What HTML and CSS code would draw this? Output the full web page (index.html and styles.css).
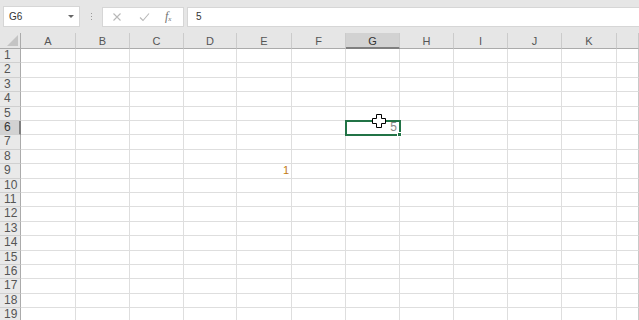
FILE: index.html
```html
<!DOCTYPE html>
<html>
<head>
  <title>Sheet1</title>
  <link rel="stylesheet" href="styles.css">
</head>
<body>
  <div class="toolbar">
    <div class="namebox">
      <span>G6</span>
      <span class="caret"></span>
    </div>
    <div class="grip"><i></i><i></i><i></i></div>
    <div class="fx-buttons">
      <svg class="fx-icon" width="10" height="10" viewBox="0 0 10 10"><path d="M1.5 1.5 L8.5 8.5 M8.5 1.5 L1.5 8.5" stroke="#b8b8b8" stroke-width="1.1" fill="none"/></svg>
      <svg class="fx-icon" width="11" height="10" viewBox="0 0 11 10"><path d="M1 5.5 L4 8.5 L10 1.5" stroke="#b8b8b8" stroke-width="1.1" fill="none"/></svg>
      <span class="fx-label">f<sub>x</sub></span>
    </div>
    <div class="formula">5</div>
  </div>

  <div class="sheet" id="sheet"></div>

  <svg class="cursor" width="14" height="14" viewBox="0 0 14 14">
    <path d="M4.5 0.5 H9.5 V4.5 H13.5 V9.5 H9.5 V13.5 H4.5 V9.5 H0.5 V4.5 H4.5 Z" fill="#fff" stroke="#000" stroke-width="1"/>
  </svg>

  <script src="script.js"></script>
</body>
</html>
```

FILE: styles.css
```css
body {
  margin: 0;
  background-color: #e6e6e6;
  font-family: "Liberation Sans", Arial, sans-serif;
  width: 639px;
  height: 320px;
  overflow: hidden;
  position: relative;
}

.toolbar {
  display: flex;
  align-items: center;
  height: 33px;
  padding: 0 0 0 3px;
  box-sizing: border-box;
}
.namebox {
  width: 77px; height: 21px;
  box-sizing: border-box;
  background: #fff;
  border: 1px solid #d6d6d6;
  display: flex; align-items: center; justify-content: space-between;
  padding: 0 5px 0 5px;
  font-size: 10px; color: #333;
  margin-top: -1px;
}
.caret {
  width: 0; height: 0;
  border-left: 3px solid transparent;
  border-right: 3px solid transparent;
  border-top: 3px solid #666;
}
.grip {
  width: 22px;
  display: flex; flex-direction: column; align-items: center; gap: 2px;
}
.grip i { width: 1px; height: 1px; background: #9a9a9a; display: block; }
.fx-buttons {
  width: 82px; height: 20px;
  box-sizing: border-box;
  background: #fff;
  border: 1px solid #d6d6d6;
  display: flex; align-items: center;
  padding-left: 9px;
  gap: 17px;
}
.fx-label {
  font-family: "Liberation Serif", serif;
  font-style: italic; font-size: 12px; color: #707070;
  margin-left: -2px;
}
.fx-label sub { font-size: 7px; vertical-align: -1px; }
.formula {
  flex: 1;
  height: 20px;
  margin-left: 3px;
  background: #fff;
  border: 1px solid #d6d6d6;
  border-right: none;
  box-sizing: border-box;
  font-size: 10px; color: #333;
  padding-left: 8px; line-height: 18px;
}

.sheet {
  display: grid;
  grid-template-columns: 21px 55px 54px 54px 53px 55px 54px 54px 54px 54px 54px 55px 1fr;
  grid-template-rows: 16px repeat(3, 14px 15px 14px 15px 14px) 14px 15px 14px 15px;
  background: #fff;
}
.cell {
  border-right: 1px solid #dedede;
  border-bottom: 1px solid #dedede;
  box-sizing: border-box;
  font-size: 11px;
  line-height: 13px;
  text-align: right;
  padding-right: 2px;
  position: relative;
}
.col-head {
  background: #e6e6e6;
  border-right: 1px solid #cbcbcb;
  border-bottom: 1px solid #ababab;
  text-align: center;
  padding: 2px 0 0 0;
  font-size: 11px; color: #555;
}
.col-head.sel {
  background: #d2d2d2;
  border-bottom: 2px solid #7f7f7f;
  color: #333;
}
.corner {
  background: #e6e6e6;
  border-right: 1px solid #ababab;
  border-bottom: 1px solid #ababab;
  position: relative;
}
.corner::after {
  content: "";
  position: absolute; right: 2px; bottom: 2px;
  border-left: 11px solid transparent;
  border-bottom: 11px solid #c4c4c4;
}
.row-head {
  background: #e9e9e9;
  border-right: 1px solid #ababab;
  border-bottom: 1px solid #d0d0d0;
  box-sizing: border-box;
  text-align: left;
  padding-left: 4px;
  font-size: 12px; line-height: 13px; color: #555;
}
.row-head.sel {
  background: #d2d2d2;
  border-right: 2px solid #7f7f7f;
  color: #333;
}
.active {
  outline: 2px solid #217346;
  outline-offset: -1px;
  color: #888;
  font-size: 12px;
  z-index: 2;
}
.active::after {
  content: "";
  position: absolute;
  right: -3px; bottom: -3px;
  width: 5px; height: 5px;
  background: #217346;
  border: 1px solid #fff;
  box-sizing: border-box;
}
.num-orange { color: #c27a12; }
.last { border-right: 1px solid #c8c8c8; }

.cursor {
  position: absolute;
  left: 372px; top: 114px;
  z-index: 5;
}
```

FILE: script.js
```js
const sheet = document.getElementById('sheet');
const cols = ['A','B','C','D','E','F','G','H','I','J','K'];
const values = { 'G6': '5', 'E9': '1' };

function add(cls, text) {
  const d = document.createElement('div');
  d.className = cls;
  if (text) d.innerText = text;
  sheet.appendChild(d);
  return d;
}

add('corner');
cols.forEach(c => add('col-head' + (c === 'G' ? ' sel' : ''), c));
add('col-head last');

for (let r = 1; r <= 19; r++) {
  add('row-head' + (r === 6 ? ' sel' : ''), String(r));
  cols.forEach(c => {
    const key = c + r;
    let cls = 'cell';
    if (key === 'G6') cls += ' active';
    if (key === 'E9') cls += ' num-orange';
    add(cls, values[key] || '');
  });
  add('cell last');
}
```
